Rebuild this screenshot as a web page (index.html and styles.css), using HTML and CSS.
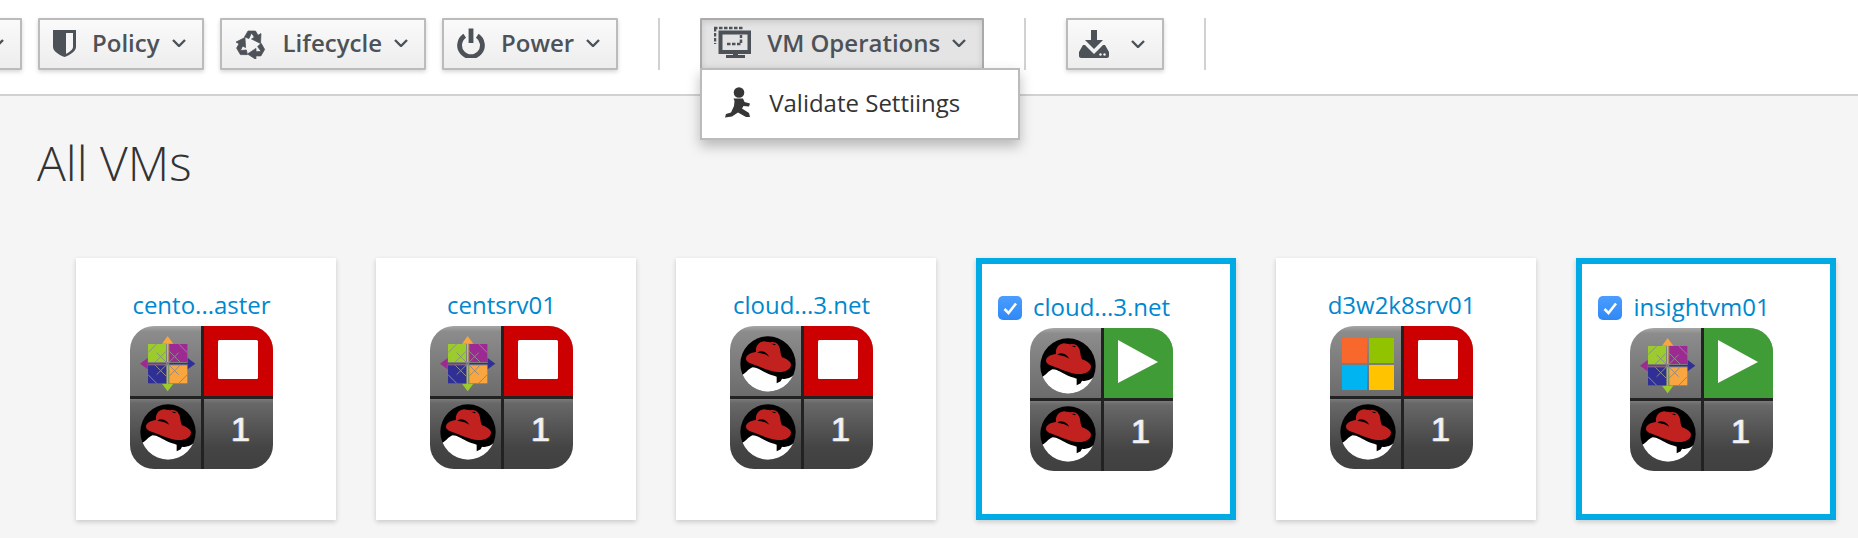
FILE: index.html
```html
<!DOCTYPE html>
<html lang="en">
<head>
<meta charset="utf-8">
<title>All VMs</title>
<link rel="stylesheet" href="styles.css">
</head>
<body>
<svg class="defs" aria-hidden="true">
  <defs>
    <linearGradient id="g-top" x1="0" y1="0" x2="0" y2="1">
      <stop offset="0" stop-color="#a6a6a6"/><stop offset=".08" stop-color="#8c8c8c"/><stop offset="1" stop-color="#6c6c6c"/>
    </linearGradient>
    <linearGradient id="g-bot" x1="0" y1="0" x2="0" y2="1">
      <stop offset="0" stop-color="#7a7a7a"/><stop offset=".06" stop-color="#686868"/><stop offset=".7" stop-color="#444"/><stop offset="1" stop-color="#404040"/>
    </linearGradient>
    <clipPath id="rh-clip"><circle cx="96" cy="96" r="83"/></clipPath>
    <g id="c-q">
      <rect x="36" y="36" width="54" height="54"/>
      <polygon points="78,155 112,155 95,178"/>
      <rect x="93" y="100" width="4" height="56"/>
      <path d="M93 93 62 62M90 58 58 90M62 36 36 62" fill="none" stroke="#8c8c8c" stroke-width="3"/>
    </g>
    <symbol id="base" viewBox="0 0 143 143">
      <rect width="143" height="70" fill="url(#g-top)"/>
      <rect y="70" width="143" height="3" fill="#222"/>
      <rect y="73" width="143" height="70" fill="url(#g-bot)"/>
      <rect x="71" width="3" height="143" fill="#222"/>
    </symbol>
    <symbol id="stop" viewBox="0 0 143 143">
      <rect x="74" width="69" height="70" fill="#c00"/>
      <rect x="88" y="14" width="40" height="39" rx="1.5" fill="#fff"/>
    </symbol>
    <symbol id="play" viewBox="0 0 143 143">
      <rect x="74" width="69" height="70" fill="#409c36"/>
      <polygon points="88,12 128,34 88,55" fill="#fff"/>
    </symbol>
    <symbol id="centos" viewBox="0 0 192 192">
      <g fill="#9ccc2c"><use href="#c-q"/></g>
      <g fill="#9c2a92"><use href="#c-q" transform="rotate(90 95 95)"/></g>
      <g fill="#f9a540"><use href="#c-q" transform="rotate(180 95 95)"/></g>
      <g fill="#2f2f96"><use href="#c-q" transform="rotate(270 95 95)"/></g>
    </symbol>
    <symbol id="windows" viewBox="0 0 64 64">
      <rect x="6" y="6" width="25" height="25" fill="#f8682c"/>
      <rect x="33" y="6" width="25" height="25" fill="#91c300"/>
      <rect x="6" y="33" width="25" height="25" fill="#00b4f1"/>
      <rect x="33" y="33" width="25" height="25" fill="#ffc300"/>
    </symbol>
    <symbol id="redhat" viewBox="0 0 192 192">
      <circle cx="96" cy="96" r="83" fill="#000"/>
      <g clip-path="url(#rh-clip)">
        <path fill="#fff" d="M10 132C28 128 36 110 50 106 64 106 76 116 90 122 100 128 112 130 122 134L122 154 134 148 138 140C150 142 160 140 172 130V192H10Z"/>
      </g>
      <path fill="#c1221f" d="M60 60C58 45 66 30 84 28 92 28 98 32 106 30 120 28 130 38 132 52 134 62 134 70 138 76 150 80 165 88 165 98 165 112 145 122 125 120 100 118 75 105 55 98 45 95 30 90 30 80 30 68 46 62 60 60Z"/>
      <path fill="#000" d="M106 35 120 36 116 40ZM64 62C78 52 92 62 100 74 92 68 80 64 64 62Z"/>
    </symbol>
  </defs>
</svg>

<header class="toolbar">
  <button class="btn btn-clipped" type="button">
    <svg class="chev" viewBox="0 0 14 8"><path d="M1 1l6 6 6-6"/></svg>
  </button>
  <button class="btn" type="button">
    <svg class="ico ico-shield" viewBox="0 0 23 27"><path d="M0 0H23V17C23 21 17 25 11.500 27 6 25 0 21 0 17Z"/><path class="cut" d="M13 3H20V17C20 19.500 16 22.500 13 23.700Z"/></svg>
    <span>Policy</span>
    <svg class="chev" viewBox="0 0 14 8"><path d="M1 1l6 6 6-6"/></svg>
  </button>
  <button class="btn" type="button">
    <svg class="ico ico-recycle" viewBox="0 0 32 31">
      <g id="rc"><path class="thick" d="M9.500 9 13 3H20.500L23 7.300 26 5.500 25.500 15.500 16.500 11 19.300 9.300 16.500 5 14 10.500Z"/></g>
      <use href="#rc" transform="rotate(120 16 17)"/>
      <use href="#rc" transform="rotate(240 16 17)"/>
    </svg>
    <span>Lifecycle</span>
    <svg class="chev" viewBox="0 0 14 8"><path d="M1 1l6 6 6-6"/></svg>
  </button>
  <button class="btn" type="button">
    <svg class="ico ico-power" viewBox="0 0 29 30"><path class="line" d="M8 7.500A11.800 11.800 0 1 0 21 7.500M14.500 0V15"/></svg>
    <span>Power</span>
    <svg class="chev" viewBox="0 0 14 8"><path d="M1 1l6 6 6-6"/></svg>
  </button>
  <span class="sep"></span>
  <div class="menu-wrap">
    <button class="btn btn-active" type="button">
      <svg class="ico ico-vm" viewBox="0 0 37 32">
        <path class="dash" d="M0 2H29M1 2V18"/>
        <path class="line-thin" d="M6.500 6.500H35.500V26H6.500Z"/>
        <path class="dash" d="M13 18H27V9"/>
        <path d="M19 26H24V29H19ZM12 29H31V32H12Z"/>
      </svg>
      <span>VM Operations</span>
      <svg class="chev" viewBox="0 0 14 8"><path d="M1 1l6 6 6-6"/></svg>
    </button>
    <div class="menu">
      <div class="menu-item">
        <svg class="ico-run" viewBox="0 0 26 31"><circle cx="14" cy="5.500" r="5.300"/><path d="M8.500 11.500H18L19.500 15 25 16.500 24 19.500 18.500 19 17 21.500 24 26 25 30 21 30 13 25.500 7 29.500 0 30.500 1 27 6 25.500 9 19 9.500 14Z"/></svg>
        <span>Validate Settiings</span>
      </div>
    </div>
  </div>
  <span class="sep"></span>
  <button class="btn btn-download" type="button">
    <svg class="ico ico-dl" viewBox="0 0 30 28"><path d="M12 0H18V10H24L15 19 6 10H12Z"/><path d="M4 15H6L15 24 24 15H26L30 22V26C30 27 29 28 28 28H2C1 28 0 27 0 26V22Z"/><circle class="cut" cx="21.500" cy="24.500" r="1.200"/><circle class="cut" cx="25.500" cy="24.500" r="1.200"/></svg>
    <svg class="chev" viewBox="0 0 14 8"><path d="M1 1l6 6 6-6"/></svg>
  </button>
  <span class="sep"></span>
</header>

<main class="content">
  <h1 class="page-title">All VMs</h1>
  <section class="cards">
    <article class="card">
      <a class="card-title">cento...aster</a>
      <div class="tile">
        <svg class="tile-art" viewBox="0 0 143 143"><use href="#base"/><use href="#stop"/><use href="#centos" x="6" y="6" width="64" height="64"/><use href="#redhat" x="6" y="74" width="64" height="64"/></svg>
        <span class="tile-count">1</span>
      </div>
    </article>
    <article class="card">
      <a class="card-title">centsrv01</a>
      <div class="tile">
        <svg class="tile-art" viewBox="0 0 143 143"><use href="#base"/><use href="#stop"/><use href="#centos" x="6" y="6" width="64" height="64"/><use href="#redhat" x="6" y="74" width="64" height="64"/></svg>
        <span class="tile-count">1</span>
      </div>
    </article>
    <article class="card">
      <a class="card-title">cloud...3.net</a>
      <div class="tile">
        <svg class="tile-art" viewBox="0 0 143 143"><use href="#base"/><use href="#stop"/><use href="#redhat" x="6" y="6" width="64" height="64"/><use href="#redhat" x="6" y="74" width="64" height="64"/></svg>
        <span class="tile-count">1</span>
      </div>
    </article>
    <article class="card card-selected">
      <span class="check"><svg viewBox="0 0 24 24"><path d="M6.500 13 10.500 17 18 7.500"/></svg></span>
      <a class="card-title">cloud...3.net</a>
      <div class="tile">
        <svg class="tile-art" viewBox="0 0 143 143"><use href="#base"/><use href="#play"/><use href="#redhat" x="6" y="6" width="64" height="64"/><use href="#redhat" x="6" y="74" width="64" height="64"/></svg>
        <span class="tile-count">1</span>
      </div>
    </article>
    <article class="card">
      <a class="card-title">d3w2k8srv01</a>
      <div class="tile">
        <svg class="tile-art" viewBox="0 0 143 143"><use href="#base"/><use href="#stop"/><use href="#windows" x="6" y="6" width="64" height="64"/><use href="#redhat" x="6" y="74" width="64" height="64"/></svg>
        <span class="tile-count">1</span>
      </div>
    </article>
    <article class="card card-selected">
      <span class="check"><svg viewBox="0 0 24 24"><path d="M6.500 13 10.500 17 18 7.500"/></svg></span>
      <a class="card-title">insightvm01</a>
      <div class="tile">
        <svg class="tile-art" viewBox="0 0 143 143"><use href="#base"/><use href="#play"/><use href="#centos" x="6" y="6" width="64" height="64"/><use href="#redhat" x="6" y="74" width="64" height="64"/></svg>
        <span class="tile-count">1</span>
      </div>
    </article>
  </section>
</main>
</body>
</html>
```
FILE: styles.css
```css
* { box-sizing: border-box; }
html, body { height: 100%; }
body {
  margin: 0;
  overflow: hidden;
  background: #f5f5f5;
  color: #333;
  font-family: "Open Sans", "Liberation Sans", sans-serif;
}
.defs { display: block; width: 0; height: 0; }

.toolbar {
  display: flex;
  align-items: flex-start;
  gap: 16px;
  height: 96px;
  padding-top: 18px;
  background: #fff;
  border-bottom: 2px solid #d1d1d1;
}
.btn {
  display: flex;
  flex: none;
  align-items: center;
  height: 52px;
  padding: 0 16px 2px 13px;
  border: 2px solid #bbb;
  border-radius: 1px;
  background: linear-gradient(#fafafa, #ededed);
  box-shadow: 0 2px 4px rgba(0, 0, 0, .16);
  color: #4d5258;
  font: 600 24px/1 "Open Sans", sans-serif;
}
.btn-clipped { width: 122px; margin-left: -100px; justify-content: flex-end; }
.btn-active {
  padding-left: 12px;
  border-color: #aaa;
  background: #e4e4e4;
  box-shadow: inset 0 2px 6px rgba(0, 0, 0, .12);
}
.btn-download { padding: 0 17px 0 11px; gap: 22px; }
.chev { flex: none; width: 14px; height: 8px; margin-left: 12px; }
.btn-download .chev { margin-left: 0; }
.chev path { fill: none; stroke: #4d5258; stroke-width: 2.4; }
.ico { flex: none; fill: #4d5258; margin-right: 16px; }
.cut { fill: #f5f5f5; }
.thick { stroke: #4d5258; stroke-width: .7; stroke-linejoin: round; }
.ico-shield { width: 23px; height: 27px; }
.ico-recycle { width: 32px; height: 31px; }
.ico-power { width: 28px; height: 30px; }
.ico-vm { width: 37px; height: 32px; margin: -2px 16px 0 0; }
.ico-dl { width: 30px; height: 28px; margin-right: 0; }
.line { fill: none; stroke: #4d5258; stroke-width: 5; }
.line-thin { fill: none; stroke: #4d5258; stroke-width: 4; }
.dash { fill: none; stroke: #4d5258; stroke-width: 2.500; stroke-dasharray: 3.500 1.500; }

.sep { flex: none; width: 2px; height: 52px; margin: 0 24px; background: #d1d1d1; }

.menu-wrap { position: relative; flex: none; }
.menu {
  position: absolute;
  top: 50px;
  left: 0;
  z-index: 2;
  width: 320px;
  height: 72px;
  border: 2px solid #bbb;
  background: #fff;
  box-shadow: 0 6px 12px rgba(0, 0, 0, .25);
}
.menu-item {
  display: flex;
  align-items: center;
  gap: 18px;
  height: 100%;
  padding: 0 0 3px 23px;
  color: #333;
  font-size: 24px;
  line-height: 1;
}
.ico-run { flex: none; width: 26px; height: 31px; fill: #363636; }

.content { padding: 37px 0 0 37px; }
.page-title {
  margin: 0 0 65px;
  color: #333;
  font-size: 48px;
  font-weight: 300;
  line-height: 60px;
}
.cards { display: flex; gap: 40px; margin-left: 39px; }
.card {
  position: relative;
  display: flex;
  flex: none;
  flex-direction: column;
  align-items: center;
  width: 260px;
  height: 262px;
  padding: 30px 63px 0 54px;
  background: #fff;
  box-shadow: 0 2px 5px rgba(0, 0, 0, .18);
}
.card-selected { padding: 26px 57px 0 48px; border: 6px solid #00aae4; }
.card-title {
  flex: none;
  height: 38px;
  color: #0088ce;
  font-size: 24px;
  line-height: 34px;
  white-space: nowrap;
}
.tile {
  position: relative;
  flex: none;
  width: 143px;
  height: 143px;
  border-radius: 24px;
  overflow: hidden;
}
.tile-art { display: block; width: 143px; height: 143px; }
.tile-count {
  position: absolute;
  top: 83px;
  left: 101px;
  color: #f2f2f2;
  font: 400 34px/40px "Liberation Sans", Arial, sans-serif;
  -webkit-text-stroke: .6px #f2f2f2;
  text-shadow: -1px 0 #7ea9dd, 1px 0 #d99a55;
}
.check {
  position: absolute;
  top: 32px;
  left: 16px;
  width: 24px;
  height: 24px;
  border-radius: 5px;
  background: linear-gradient(#4b9eff, #2f88f6);
}
.check svg { display: block; width: 24px; height: 24px; fill: none; stroke: #fff; stroke-width: 2.600; }
```
